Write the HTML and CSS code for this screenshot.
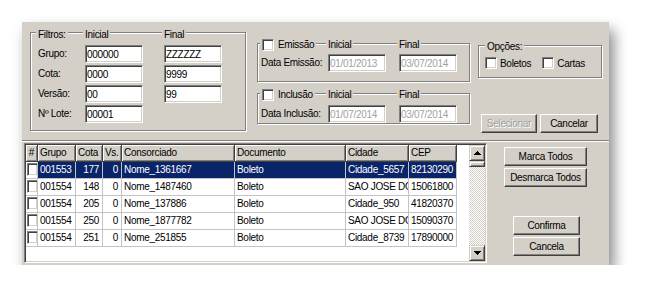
FILE: index.html
```html
<!DOCTYPE html>
<html lang="pt-BR">
<head>
    <meta charset="UTF-8">
    <title>Seleção de Boletos</title>
    <link rel="stylesheet" href="styles.css">
</head>
<body>

<div class="window">

    <!-- Filtros da pesquisa -->
    <div class="top">
        <div class="group filtros">
            <div class="group-head filtros-cols">
                <span class="cap">Filtros:</span>
                <span class="cap">Inicial</span>
                <span class="cap">Final</span>
            </div>
            <div class="filtros-cols filtros-rows">
                <label>Grupo:</label><input class="edit" value="000000"><input class="edit" value="ZZZZZZ">
                <label>Cota:</label><input class="edit" value="0000"><input class="edit" value="9999">
                <label>Versão:</label><input class="edit" value="00"><input class="edit" value="99">
                <label>Nº Lote:</label><input class="edit" value="00001">
            </div>
        </div>

        <div class="col-mid">
            <div class="group periodo emissao">
                <div class="group-head periodo-cols">
                    <span class="cap cap-check"><span class="check"></span>Emissão</span>
                    <span class="cap">Inicial</span>
                    <span class="cap">Final</span>
                </div>
                <div class="periodo-cols periodo-row">
                    <label>Data Emissão:</label>
                    <input class="edit off" value="01/01/2013">
                    <input class="edit off" value="03/07/2014">
                </div>
            </div>
            <div class="group periodo inclusao">
                <div class="group-head periodo-cols">
                    <span class="cap cap-check"><span class="check"></span>Inclusão</span>
                    <span class="cap">Inicial</span>
                    <span class="cap">Final</span>
                </div>
                <div class="periodo-cols periodo-row">
                    <label>Data Inclusão:</label>
                    <input class="edit off" value="01/07/2014">
                    <input class="edit off" value="03/07/2014">
                </div>
            </div>
        </div>

        <div class="col-right">
            <div class="group opcoes">
                <div class="group-head opcoes-head">
                    <span class="cap">Opções:</span>
                </div>
                <div class="opcoes-row">
                    <span class="opt"><span class="check"></span>Boletos</span>
                    <span class="opt"><span class="check"></span>Cartas</span>
                </div>
            </div>
            <div class="top-btns">
                <button class="btn btn-sel" disabled>Selecionar</button>
                <button class="btn btn-canc">Cancelar</button>
            </div>
        </div>
    </div>

    <!-- Resultado -->
    <div class="bottom">
        <div class="grid-box">
            <div class="grid">
                <div class="row head">
                    <div class="c mid">#</div>
                    <div class="c">Grupo</div>
                    <div class="c">Cota</div>
                    <div class="c">Vs.</div>
                    <div class="c">Consorciado</div>
                    <div class="c">Documento</div>
                    <div class="c">Cidade</div>
                    <div class="c">CEP</div>
                </div>
                <div class="row sel">
                    <div class="c chk-cell"><span class="chk"></span></div>
                    <div class="c">001553</div>
                    <div class="c num">177</div>
                    <div class="c num">0</div>
                    <div class="c">Nome_1361667</div>
                    <div class="c">Boleto</div>
                    <div class="c">Cidade_5657</div>
                    <div class="c">82130290</div>
                </div>
                <div class="row">
                    <div class="c chk-cell"><span class="chk"></span></div>
                    <div class="c">001554</div>
                    <div class="c num">148</div>
                    <div class="c num">0</div>
                    <div class="c">Nome_1487460</div>
                    <div class="c">Boleto</div>
                    <div class="c">SAO JOSE DOS CAMPOS</div>
                    <div class="c">15061800</div>
                </div>
                <div class="row">
                    <div class="c chk-cell"><span class="chk"></span></div>
                    <div class="c">001554</div>
                    <div class="c num">205</div>
                    <div class="c num">0</div>
                    <div class="c">Nome_137886</div>
                    <div class="c">Boleto</div>
                    <div class="c">Cidade_950</div>
                    <div class="c">41820370</div>
                </div>
                <div class="row">
                    <div class="c chk-cell"><span class="chk"></span></div>
                    <div class="c">001554</div>
                    <div class="c num">250</div>
                    <div class="c num">0</div>
                    <div class="c">Nome_1877782</div>
                    <div class="c">Boleto</div>
                    <div class="c">SAO JOSE DOS CAMPOS</div>
                    <div class="c">15090370</div>
                </div>
                <div class="row">
                    <div class="c chk-cell"><span class="chk"></span></div>
                    <div class="c">001554</div>
                    <div class="c num">251</div>
                    <div class="c num">0</div>
                    <div class="c">Nome_251855</div>
                    <div class="c">Boleto</div>
                    <div class="c">Cidade_8739</div>
                    <div class="c">17890000</div>
                </div>
            </div>
            <div class="scroll">
                <div class="sb-btn"><svg width="7" height="4" viewBox="0 0 7 4"><path d="M3 0h1v1h1v1h1v1h1v1H0V3h1V2h1V1h1z"/></svg></div>
                <div class="sb-track"><div class="sb-thumb"></div></div>
                <div class="sb-btn"><svg width="7" height="4" viewBox="0 0 7 4"><path d="M0 0h7v1H6v1H5v1H4v1H3V3H2V2H1V1H0z"/></svg></div>
            </div>
        </div>

        <div class="side">
            <button class="btn btn-wide">Marca Todos</button>
            <button class="btn btn-wide">Desmarca Todos</button>
            <button class="btn btn-ok">Confirma</button>
            <button class="btn btn-ok">Cancela</button>
        </div>
    </div>

</div>

</body>
</html>
```

FILE: styles.css
```css
body {
    margin: 0;
    background-color: #ffffff;
    font-family: "Liberation Sans", Arial, sans-serif;
    font-size: 10px;
    letter-spacing: -0.3px;
    color: #000;
}

/* Window */
.window {
    margin: 22px 0 0 22px;
    width: 587px;
    height: 243px;
    background-color: #d4d0c8;
    box-shadow: 5px 8px 13px rgba(0, 0, 0, 0.45);
    display: flex;
    flex-direction: column;
}

.top {
    height: 119px;
    box-sizing: border-box;
    border-bottom: 1px solid #808080;
    padding-left: 8px;
    display: flex;
    align-items: flex-start;
}

.bottom {
    flex: 1;
    border-top: 1px solid #ffffff;
    display: flex;
    align-items: flex-start;
}

/* Group boxes */
.group {
    box-sizing: border-box;
    border: 1px solid #808080;
    box-shadow: inset 1px 1px #ffffff, 1px 1px #ffffff;
}

.group-head {
    margin-top: -5px;
    height: 13px;
    line-height: 13px;
}

.cap {
    justify-self: start;
    background-color: #d4d0c8;
    padding: 0 2px;
    margin-left: -2px;
}

label {
    line-height: 18px;
}

.filtros {
    margin-top: 10px;
    width: 216px;
    height: 99px;
}

.filtros-cols {
    display: grid;
    grid-template-columns: 47px 79px 58px;
    padding-left: 7px;
}

.filtros-rows {
    margin-top: 4px;
    row-gap: 2px;
    grid-auto-rows: 18px;
}

.col-mid {
    margin-left: 11px;
    width: 213px;
}

.periodo .group-head {
    margin-top: -6px;
}

.periodo-cols {
    display: grid;
    grid-template-columns: 67px 71px 58px;
    padding-left: 3px;
}

.emissao {
    margin-top: 21px;
    height: 39px;
}

.emissao .periodo-row {
    margin-top: 3px;
}

.inclusao {
    margin-top: 11px;
    height: 31px;
}

.inclusao .periodo-row {
    margin-top: 4px;
}

.cap-check {
    display: flex;
    align-items: center;
    gap: 4px;
    margin-left: -1px;
}

.col-right {
    margin-left: 8px;
    width: 124px;
}

.opcoes {
    margin-top: 23px;
    height: 33px;
}

.opcoes .group-head {
    margin-top: -6px;
    padding-left: 8px;
}

.opcoes-row {
    margin-top: 4px;
    padding-left: 6px;
    display: flex;
    gap: 11px;
    height: 12px;
}

.opt {
    display: flex;
    align-items: center;
    gap: 3px;
}

/* Edits and checks */
.edit {
    box-sizing: border-box;
    width: 58px;
    height: 18px;
    margin: 0;
    padding: 0 1px;
    border: 1px solid;
    border-color: #808080 #ffffff #ffffff #808080;
    box-shadow: inset 1px 1px #404040, inset -1px -1px #d4d0c8;
    background-color: #ffffff;
    font: inherit;
    letter-spacing: inherit;
    color: #000;
    outline: none;
}

.edit.off {
    color: #a2a2a2;
}

.check {
    display: inline-block;
    box-sizing: border-box;
    width: 12px;
    height: 12px;
    border: 1px solid;
    border-color: #808080 #ffffff #ffffff #808080;
    box-shadow: inset 1px 1px #404040, inset -1px -1px #d4d0c8;
    background-color: #ffffff;
}

/* Buttons */
.btn {
    box-sizing: border-box;
    height: 19px;
    margin: 0;
    padding: 0;
    border: 1px solid;
    border-color: #ffffff #404040 #404040 #ffffff;
    box-shadow: inset -1px -1px #808080;
    background-color: #d4d0c8;
    font: inherit;
    letter-spacing: inherit;
    color: #000;
}

.btn:disabled {
    color: #a0a0a0;
    text-shadow: 1px 1px #ffffff;
}

.top-btns {
    margin: 36px 0 0 3px;
    display: flex;
    gap: 3px;
}

.btn-sel {
    width: 56px;
}

.btn-canc {
    width: 58px;
}

.side {
    margin: 5px 0 0 17px;
    display: flex;
    flex-direction: column;
    align-items: flex-start;
}

.btn-wide {
    width: 83px;
    margin-bottom: 2px;
}

.btn-ok {
    width: 67px;
    margin-left: 9px;
    margin-bottom: 2px;
}

.btn-wide + .btn-ok {
    margin-top: 27px;
}

/* Grid */
.grid-box {
    margin: 1px 0 0 2px;
    width: 463px;
    height: 120px;
    box-sizing: border-box;
    border: 1px solid;
    border-color: #808080 #ffffff #ffffff #808080;
    box-shadow: inset 1px 1px #404040, inset -1px -1px #d4d0c8;
    padding: 1px;
    display: flex;
}

.grid {
    flex: 1;
    background-color: #ffffff;
    overflow: hidden;
}

.row {
    display: grid;
    grid-template-columns: 12px 38px 27px 19px 113px 111px 63px 48px;
    height: 17px;
}

.c {
    box-sizing: border-box;
    border-right: 1px solid #c4c4c4;
    border-bottom: 1px solid #c4c4c4;
    padding: 0 2px;
    line-height: 16px;
    white-space: nowrap;
    overflow: hidden;
}

.num {
    text-align: right;
    padding-right: 3px;
}

.mid {
    text-align: center;
    padding: 0;
}

.head .c {
    background-color: #d4d0c8;
    border-color: #404040;
    box-shadow: inset 1px 1px #ffffff, inset -1px -1px #808080;
}

.sel .c {
    background-color: #0a246a;
    color: #ffffff;
}

.sel .chk-cell {
    background-color: #ffffff;
}

.chk-cell {
    padding: 1px 0 0 1px;
}

.chk {
    display: block;
    box-sizing: border-box;
    width: 11px;
    height: 13px;
    border: 1px solid;
    border-color: #808080 #ffffff #ffffff #808080;
    box-shadow: inset 1px 1px #404040, inset -1px -1px #d4d0c8;
    background-color: #ffffff;
}

/* Scrollbar */
.scroll {
    width: 16px;
    display: flex;
    flex-direction: column;
}

.sb-btn {
    box-sizing: border-box;
    height: 16px;
    border: 1px solid;
    border-color: #d4d0c8 #404040 #404040 #d4d0c8;
    box-shadow: inset 1px 1px #ffffff, inset -1px -1px #808080;
    background-color: #d4d0c8;
    display: flex;
    align-items: center;
    justify-content: center;
}

.sb-track {
    flex: 1;
    background: repeating-conic-gradient(#ffffff 0 25%, #d4d0c8 0 50%) 0 0 / 2px 2px;
}

.sb-thumb {
    box-sizing: border-box;
    height: 6px;
    border: 1px solid;
    border-color: #d4d0c8 #404040 #404040 #d4d0c8;
    box-shadow: inset 1px 1px #ffffff, inset -1px -1px #808080;
    background-color: #d4d0c8;
}
```
